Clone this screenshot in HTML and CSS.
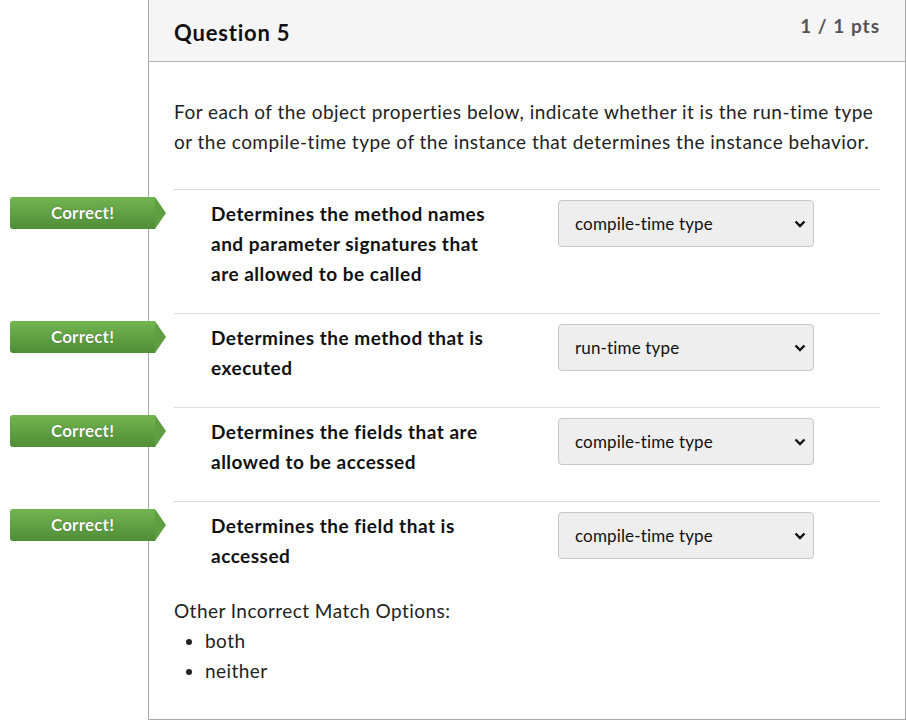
FILE: index.html
```html
<!DOCTYPE html>
<html>
<head>
<meta charset="utf-8">
<link rel="stylesheet" href="styles.css">
</head>
<body>
<div class="question">
  <div class="q-header">
    <h2 class="q-title">Question 5</h2>
    <div class="q-pts">1 / 1 pts</div>
  </div>
  <div class="q-body">
    <p class="q-text">For each of the object properties below, indicate whether it is the run-time type or the compile-time type of the instance that determines the instance behavior.</p>
    <div class="answers">
      <div class="answer">
        <div class="badge">Correct!</div>
        <div class="label">Determines the method names and parameter signatures that are allowed to be called</div>
        <div class="select-wrap">
          <select class="select"><option>compile-time type</option></select>
          <svg class="chev" width="12" height="8" viewBox="0 0 12 8"><path d="M1.5 1.5 L6 6 L10.5 1.5" fill="none" stroke="#111" stroke-width="2.4"/></svg>
        </div>
      </div>
      <div class="answer">
        <div class="badge">Correct!</div>
        <div class="label">Determines the method that is executed</div>
        <div class="select-wrap">
          <select class="select"><option>run-time type</option></select>
          <svg class="chev" width="12" height="8" viewBox="0 0 12 8"><path d="M1.5 1.5 L6 6 L10.5 1.5" fill="none" stroke="#111" stroke-width="2.4"/></svg>
        </div>
      </div>
      <div class="answer">
        <div class="badge">Correct!</div>
        <div class="label">Determines the fields that are allowed to be accessed</div>
        <div class="select-wrap">
          <select class="select"><option>compile-time type</option></select>
          <svg class="chev" width="12" height="8" viewBox="0 0 12 8"><path d="M1.5 1.5 L6 6 L10.5 1.5" fill="none" stroke="#111" stroke-width="2.4"/></svg>
        </div>
      </div>
      <div class="answer">
        <div class="badge">Correct!</div>
        <div class="label">Determines the field that is accessed</div>
        <div class="select-wrap">
          <select class="select"><option>compile-time type</option></select>
          <svg class="chev" width="12" height="8" viewBox="0 0 12 8"><path d="M1.5 1.5 L6 6 L10.5 1.5" fill="none" stroke="#111" stroke-width="2.4"/></svg>
        </div>
      </div>
    </div>
    <div class="other">
      <div class="other-title">Other Incorrect Match Options:</div>
      <ul class="other-list">
        <li>both</li>
        <li>neither</li>
      </ul>
    </div>
  </div>
</div>
</body>
</html>
```

FILE: styles.css
```css
html, body {
  margin: 0;
  padding: 0;
  background: #fff;
}
body {
  font-family: Lato, "Liberation Sans", sans-serif;
  color: #222;
  padding-left: 148px;
  height: 720px;
  overflow: hidden;
}
.question {
  width: 756px;
  height: 719px;
  border: 1px solid #a9a9a9;
  border-top: none;
  box-sizing: content-box;
}
.q-header {
  background: #f5f5f5;
  border-bottom: 1px solid #b3b3b3;
  height: 62px;
  box-sizing: border-box;
  display: flex;
  justify-content: space-between;
  align-items: flex-start;
  padding: 0 25px;
}
.q-title {
  margin: 0;
  padding-top: 18px;
  font-size: 22px;
  letter-spacing: 0.8px;
  line-height: 30px;
  font-weight: 700;
  color: #111;
}
.q-pts {
  padding-top: 12px;
  font-size: 19px;
  letter-spacing: 1px;
  line-height: 28px;
  font-weight: 700;
  color: #555;
}
.q-body {
  padding: 35px 25px 0;
}
.q-text {
  margin: 0 0 32px;
  font-size: 19px;
  letter-spacing: 0.47px;
  line-height: 30px;
}
.answer {
  position: relative;
  display: flex;
  align-items: flex-start;
  border-top: 1px solid #ddd;
  padding: 9px 0 24px 37px;
}
.answer:last-child {
  padding-bottom: 25px;
}
.badge {
  position: absolute;
  left: -164px;
  top: 7px;
  width: 145px;
  height: 32px;
  box-sizing: border-box;
  background: linear-gradient(#72b54f, #4f8d37);
  border-radius: 3px 0 0 3px;
  color: #fff;
  font-weight: 700;
  font-size: 17px;
  letter-spacing: 0.2px;
  line-height: 31px;
  text-align: center;
  text-shadow: 0 0 1px rgba(0,0,0,0.5);
}
.badge::after {
  content: "";
  position: absolute;
  right: -11px;
  top: 0;
  border-style: solid;
  border-width: 16px 0 16px 11px;
  border-color: transparent transparent transparent #5f9f42;
}
.label {
  width: 296px;
  flex: 0 0 296px;
  font-size: 19px;
  letter-spacing: 0.5px;
  line-height: 30px;
  font-weight: 700;
  color: #111;
}
.select-wrap {
  position: relative;
  margin-left: 51px;
  margin-top: 1px;
  width: 256px;
  height: 47px;
}
.select {
  -webkit-appearance: none;
  appearance: none;
  width: 256px;
  height: 47px;
  box-sizing: border-box;
  background: #eee;
  border: 1px solid #c7c7c7;
  border-radius: 4px;
  padding: 0 30px 0 16px;
  font-family: Lato, "Liberation Sans", sans-serif;
  font-size: 17px;
  letter-spacing: 0.15px;
  color: #111;
}
.chev {
  position: absolute;
  right: 8px;
  top: 20px;
  pointer-events: none;
}
.other {
  font-size: 19px;
  letter-spacing: 0.45px;
  line-height: 30px;
}
.other-list {
  margin: 0;
  padding-left: 31px;
}
```
